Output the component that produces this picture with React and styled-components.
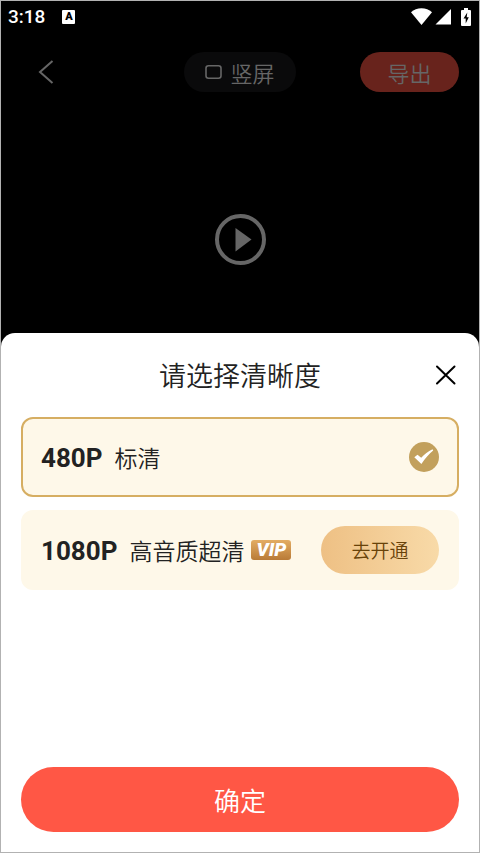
import React, { useState } from 'react';
import styled, { createGlobalStyle } from 'styled-components';

const GlobalStyle = createGlobalStyle`
    * {
        box-sizing: border-box;
    }
    body {
        margin: 0;
        font-family: "Noto Sans CJK SC", sans-serif;
        font-weight: 350;
    }
    button {
        border: 0;
        padding: 0;
        background: none;
        font-family: inherit;
        font-weight: inherit;
        cursor: pointer;
    }
    svg {
        display: block;
    }
`

const Screen = styled.div`
    display: flex;
    flex-direction: column;
    min-height: 100vh;
    border: 1px solid #b2b2b2;
    background: #000;
`

const StatusBar = styled.div`
    display: flex;
    align-items: center;
    justify-content: space-between;
    height: 31px;
    padding: 0 8px 0 7px;
    color: #fff;
    font-family: Roboto, sans-serif;
`
const StatusGroup = styled.div`
    display: flex;
    align-items: center;
    gap: ${props => props.$gap}px;
`
const Clock = styled.span`
    font-size: 19px;
    font-weight: 500;
    line-height: 31px;
`
const InputBadge = styled.span`
    width: 13px;
    height: 14px;
    border-radius: 1px;
    background: #fff;
    color: #000;
    font-size: 11px;
    font-weight: 900;
    line-height: 14px;
    text-align: center;
`

const Header = styled.header`
    display: grid;
    grid-template-columns: 1fr auto 1fr;
    align-items: center;
    margin-top: 20px;
    padding: 0 20px;
`
const BackButton = styled.button`
    justify-self: start;
    padding: 8px 17px;
    color: #666;
`
const Pill = styled.button`
    display: flex;
    align-items: center;
    justify-content: center;
    gap: 8px;
    justify-self: end;
    width: ${props => props.$width}px;
    height: 40px;
    border-radius: 20px;
    background: ${props => props.$color};
    color: #666;
    font-size: 22px;
    line-height: 38px;
`
const Preview = styled.div`
    display: flex;
    justify-content: center;
    padding: 122px 0 68px;
`
const PlayButton = styled.button`
    color: #666;
`

const Sheet = styled.section`
    display: flex;
    flex: 1;
    flex-direction: column;
    padding: 0 20px 20px;
    border-radius: 14px 14px 0 0;
    background: #fff;
    color: #222;
`
const SheetHead = styled.div`
    display: grid;
    grid-template-columns: 1fr auto 1fr;
    align-items: center;
    height: 84px;
`
const Title = styled.h2`
    grid-column: 2;
    margin: 0;
    font-size: 27px;
    font-weight: inherit;
    line-height: 40px;
`
const CloseButton = styled.button`
    justify-self: end;
    color: #000;
`
const Options = styled.div`
    display: flex;
    flex-direction: column;
    gap: 13px;
`
const Option = styled.div`
    display: flex;
    align-items: center;
    height: 80px;
    padding: 0 18px;
    border: 2px solid ${props => (props.$active ? '#d6ae62' : '#fef8e9')};
    border-radius: 12px;
    background: #fef8e9;
`
const OptionLabel = styled.label`
    display: flex;
    flex: 1;
    align-items: center;
    align-self: stretch;
    cursor: pointer;
`
const OptionText = styled.span`
    display: flex;
    align-items: baseline;
    gap: 12px;
    font-size: 23px;
    line-height: 40px;
`
const Resolution = styled.strong`
    font-family: Roboto, sans-serif;
    font-size: 26px;
    font-weight: 700;
`
const RadioMark = styled.span`
    position: relative;
    order: 1;
    width: ${props => props.$size}px;
    height: 30px;
    margin-left: auto;

    input {
        position: absolute;
        inset: 0;
        width: 100%;
        height: 100%;
        margin: 0;
        opacity: 0;
    }
`
const VipBadge = styled.span`
    width: 40px;
    height: 20px;
    margin-left: 7px;
    border-radius: 3px;
    background: linear-gradient(#e3ad64, #b97b37);
    color: #fff;
    font-family: Roboto, sans-serif;
    font-size: 19px;
    font-style: italic;
    font-weight: 900;
    line-height: 20px;
    text-align: center;
`
const UpgradeButton = styled.button`
    width: 118px;
    height: 48px;
    border-radius: 24px;
    background: linear-gradient(90deg, #eec084, #f8daa8);
    color: #684209;
    font-size: 19px;
    line-height: 48px;
`
const ConfirmButton = styled.button`
    height: 65px;
    margin-top: auto;
    border-radius: 33px;
    background: #ff5745;
    color: #fff;
    font-size: 26px;
    line-height: 65px;
`

const WifiIcon = () => (
    <svg width="21" height="17" viewBox="0 0 21 17" fill="currentColor">
        <path d="M10.5 17 0 4.2C2.9 1.6 6.5 0.3 10.5 0.3S18.1 1.6 21 4.2Z" />
    </svg>
)
const SignalIcon = () => (
    <svg width="16" height="17" viewBox="0 0 16 17" fill="currentColor">
        <path d="M16 1v15.500H0.500Z" />
    </svg>
)
const BatteryIcon = () => (
    <svg width="10" height="18" viewBox="0 0 10 18">
        <path d="M3 0h4v2h2a1 1 0 0 1 1 1v14a1 1 0 0 1-1 1H1a1 1 0 0 1-1-1V3a1 1 0 0 1 1-1h2Z" fill="#fff" />
        <path d="M6.3 4.5 2.5 10.500h2.200V15.500L7.800 9.300H5.700Z" fill="#000" />
    </svg>
)
const BackIcon = () => (
    <svg width="16" height="24" viewBox="0 0 16 24" fill="none" stroke="currentColor" strokeWidth="2">
        <path d="M14.500 1 2 12l12.500 11" />
    </svg>
)
const FrameIcon = () => (
    <svg width="17" height="14" viewBox="0 0 17 14" fill="none" stroke="currentColor" strokeWidth="1.6">
        <rect x="1" y="0.8" width="15" height="12.4" rx="2.5" />
    </svg>
)
const PlayIcon = () => (
    <svg width="51" height="51" viewBox="0 0 51 51">
        <circle cx="25.5" cy="25.5" r="23.5" fill="none" stroke="currentColor" strokeWidth="4" />
        <path d="M20.500 14v23.500L36.500 25.500Z" fill="currentColor" />
    </svg>
)
const CloseIcon = () => (
    <svg width="24" height="20" viewBox="0 0 24 20" fill="none" stroke="currentColor" strokeWidth="2" strokeLinecap="round">
        <path d="M2 1.500 19.500 18.500M19.500 1.500 2 18.500" />
    </svg>
)
const CheckIcon = () => (
    <svg width="30" height="30" viewBox="0 0 30 30">
        <circle cx="15" cy="15" r="15" fill="#c2a05c" />
        <path d="M5.300 15.300 8.500 12.700 12.200 15.800C15.500 12.200 19 9.300 23.500 7.300L24.200 8.600C20 12 16 16.500 12.400 22Z" fill="#fff" />
    </svg>
)

const qualities = [
    { id: '480', resolution: '480P', name: '标清', vip: false },
    { id: '1080', resolution: '1080P', name: '高音质超清', vip: true },
]

function QualityOption({ item, active, onSelect }) {
    return (
        <Option $active={active}>
            <OptionLabel>
                <OptionText>
                    <Resolution>{item.resolution}</Resolution>
                    <span>{item.name}</span>
                </OptionText>
                {item.vip && <VipBadge>VIP</VipBadge>}
                <RadioMark $size={item.vip ? 20 : 30}>
                    <input
                        type="radio"
                        name="quality"
                        checked={active}
                        disabled={item.vip}
                        onChange={() => onSelect(item.id)}
                    />
                    {active && <CheckIcon />}
                </RadioMark>
            </OptionLabel>
            {item.vip && <UpgradeButton type="button">去开通</UpgradeButton>}
        </Option>
    )
}

export default function App() {
    const [selected, setSelected] = useState('480');

    return (
        <Screen>
            <GlobalStyle />
            <StatusBar>
                <StatusGroup $gap={17}>
                    <Clock>3:18</Clock>
                    <InputBadge>A</InputBadge>
                </StatusGroup>
                <StatusGroup $gap={10}>
                    <StatusGroup $gap={3}>
                        <WifiIcon />
                        <SignalIcon />
                    </StatusGroup>
                    <BatteryIcon />
                </StatusGroup>
            </StatusBar>
            <Header>
                <BackButton type="button" aria-label="返回"><BackIcon /></BackButton>
                <Pill type="button" $width={112} $color="#0a0a0b"><FrameIcon />竖屏</Pill>
                <Pill type="button" $width={99} $color="#68231c">导出</Pill>
            </Header>
            <Preview>
                <PlayButton type="button" aria-label="播放"><PlayIcon /></PlayButton>
            </Preview>
            <Sheet>
                <SheetHead>
                    <Title>请选择清晰度</Title>
                    <CloseButton type="button" aria-label="关闭"><CloseIcon /></CloseButton>
                </SheetHead>
                <Options>
                    {qualities.map(item => (
                        <QualityOption
                            key={item.id}
                            item={item}
                            active={selected === item.id}
                            onSelect={setSelected}
                        />
                    ))}
                </Options>
                <ConfirmButton type="button">确定</ConfirmButton>
            </Sheet>
        </Screen>
    )
}
